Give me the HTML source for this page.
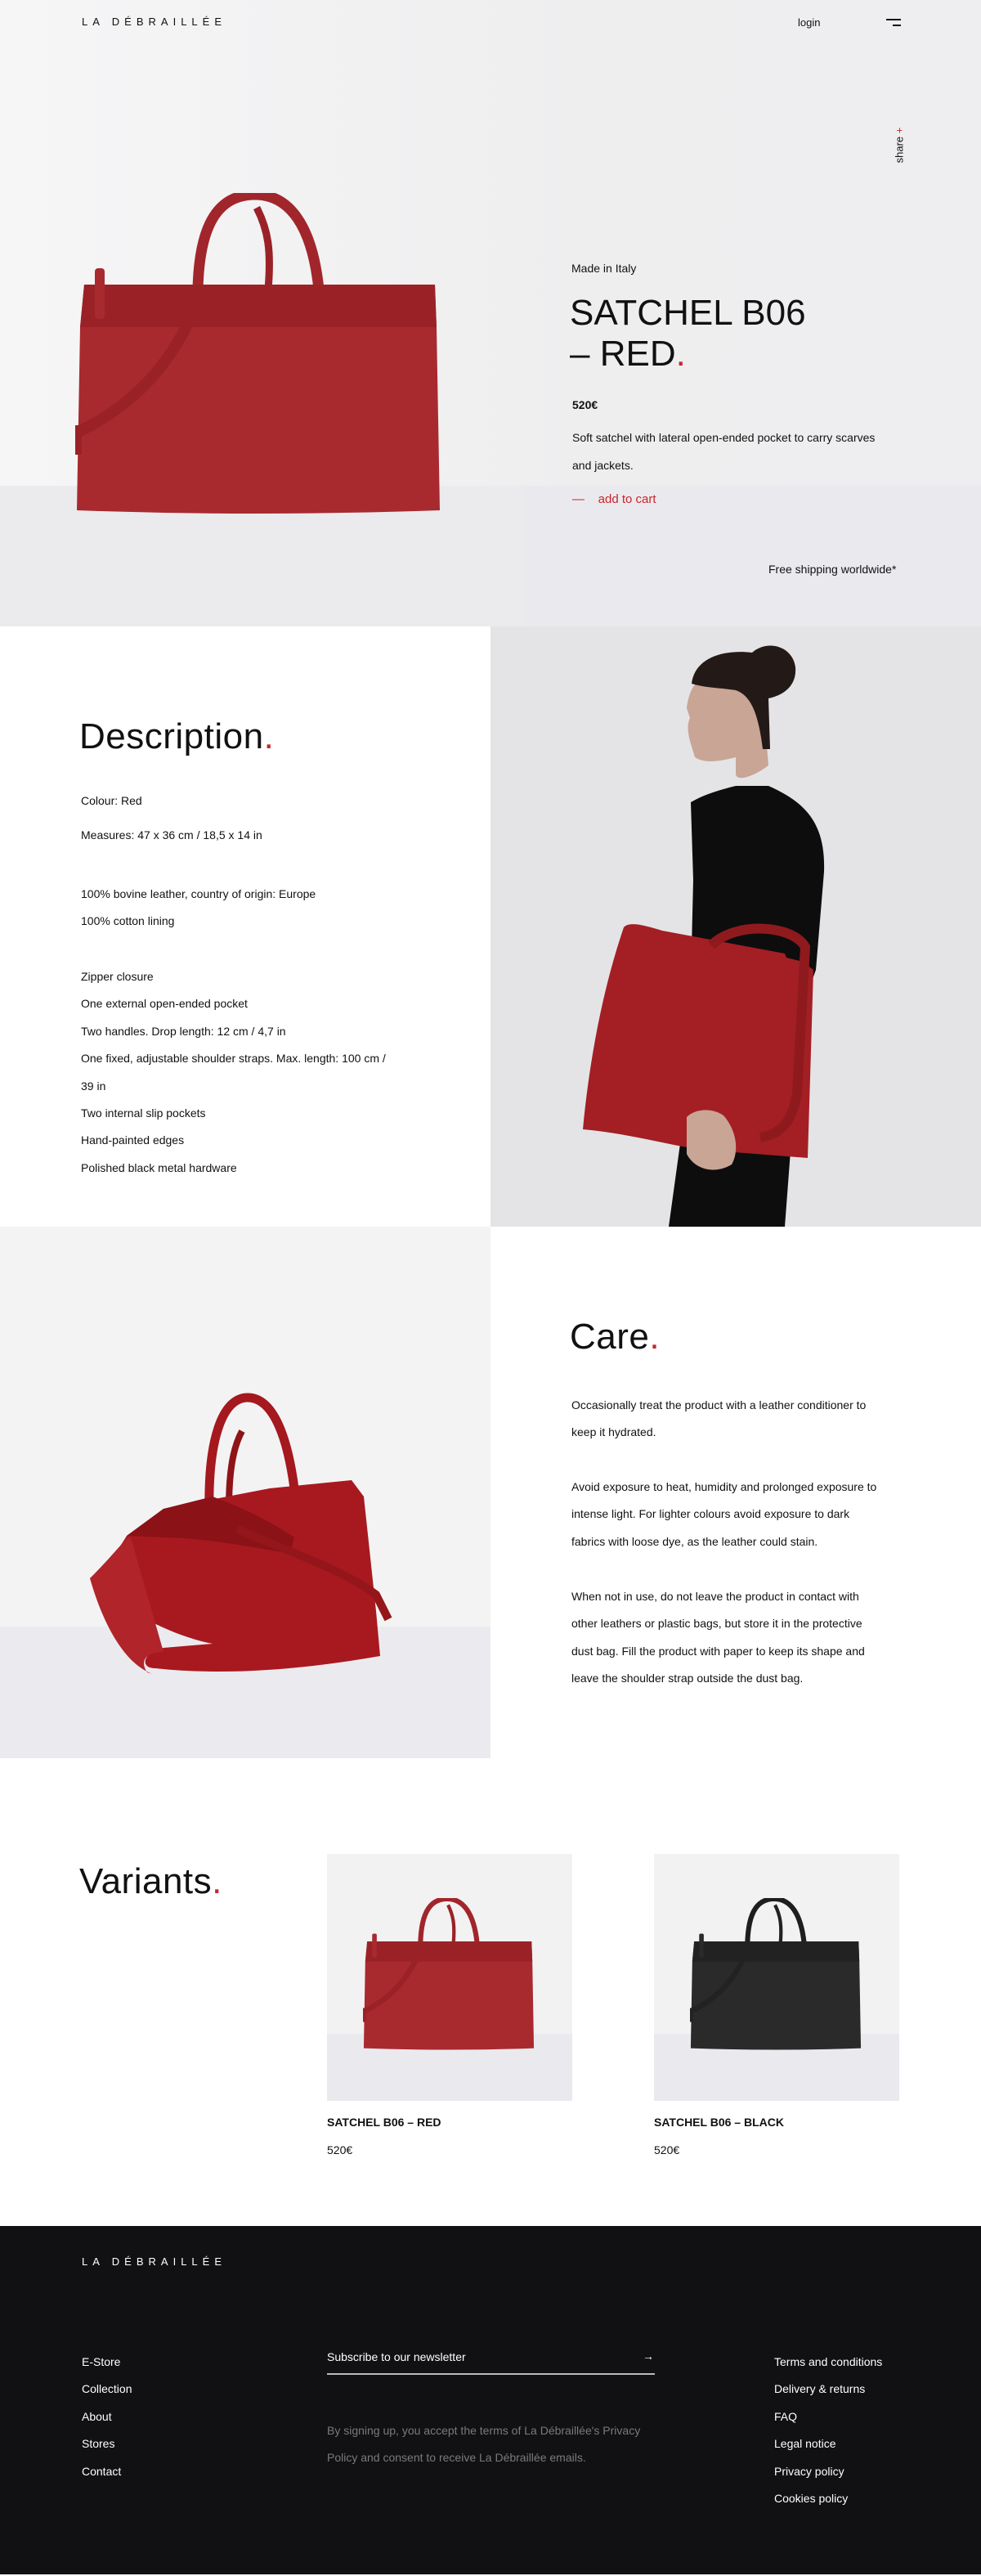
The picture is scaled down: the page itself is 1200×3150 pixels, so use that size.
<!DOCTYPE html>
<html><head><meta charset="utf-8">
<style>
*{margin:0;padding:0;box-sizing:border-box}
body{width:1200px;height:3150px;position:relative;font-family:"Liberation Sans",sans-serif;color:#111;background:#fff;overflow:hidden}
.a{position:absolute;white-space:nowrap}
.t{font-size:14px;line-height:20px}
.h{font-size:44px;letter-spacing:0.5px;line-height:50px}
.dot{color:#c8252b}
.logo{font-size:13px;letter-spacing:6px}
</style></head><body>
<svg width="0" height="0" style="position:absolute">
<defs>
<symbol id="bag" viewBox="0 0 448 393">
<path d="M150 118 C152 30 180 2 220 2 C262 2 290 40 298 118" fill="none" stroke="var(--h)" stroke-width="13"/>
<path d="M236 118 C240 70 236 45 222 18" fill="none" stroke="var(--d)" stroke-width="9"/>
<path d="M11 112 L440 112 L442 164 L446 388 Q224 396 2 388 L6 164Z" fill="var(--b)"/>
<path d="M11 112 L440 112 L442 164 L6 164Z" fill="var(--d)"/>
<rect x="24" y="92" width="12" height="62" rx="4" fill="var(--b)"/>
<rect x="272" y="112" width="18" height="50" fill="var(--d)"/>
<path d="M152 128 C120 210 70 260 4 292" fill="none" stroke="var(--d)" stroke-width="14"/>
<rect x="0" y="284" width="8" height="36" fill="var(--d)"/>
</symbol>
</defs>
</svg>

<!-- HERO -->
<div class="a" style="left:0;top:0;width:1200px;height:766px;background:linear-gradient(90deg,#f6f6f7 0%,#eeeeef 60%,#eeeef0 100%)"></div>
<div class="a" style="left:0;top:594px;width:640px;height:172px;background:#ebebee"></div>
<div class="a" style="left:640px;top:594px;width:560px;height:172px;background:#eaeaee"></div>
<svg class="a" style="left:92px;top:236px;--b:#a82a2f;--d:#9a2227;--h:#a1262b" width="448" height="393"><use href="#bag"/></svg>

<div class="a logo" style="left:100px;top:19px">LA DÉBRAILLÉE</div>
<div class="a t" style="left:976px;top:18px;font-size:13px">login</div>
<div class="a" style="left:1084px;top:23px;width:18px;height:2px;background:#111"></div>
<div class="a" style="left:1092px;top:30px;width:10px;height:2px;background:#111"></div>
<div class="a" style="left:1078px;top:170px;transform:rotate(-90deg);font-size:13px">share <span class="dot">+</span></div>

<div class="a t" style="left:699px;top:318px">Made in Italy</div>
<div class="a" style="left:697px;top:358px;font-size:44px;line-height:50px">SATCHEL B06<br>– RED<span class="dot">.</span></div>
<div class="a t" style="left:700px;top:485px;font-weight:bold">520€</div>
<div class="a t" style="left:700px;top:518px;line-height:34px">Soft satchel with lateral open-ended pocket to carry scarves<br>and jackets.</div>
<div class="a t" style="left:700px;top:601px;color:#c8252b;font-size:15px">—&nbsp;&nbsp;&nbsp;&nbsp;add to cart</div>
<div class="a t" style="left:940px;top:686px">Free shipping worldwide*</div>

<!-- DESCRIPTION -->
<div class="a h" style="left:97px;top:876px">Description<span class="dot">.</span></div>
<div class="a t" style="left:99px;top:969px">Colour: Red</div>
<div class="a t" style="left:99px;top:1011px">Measures: 47 x 36 cm / 18,5 x 14 in</div>
<div class="a t" style="left:99px;top:1077px;line-height:33.4px">100% bovine leather, country of origin: Europe<br>100% cotton lining</div>
<div class="a t" style="left:99px;top:1178px;line-height:33.4px">Zipper closure<br>One external open-ended pocket<br>Two handles. Drop length: 12 cm / 4,7 in<br>One fixed, adjustable shoulder straps. Max. length: 100 cm /<br>39 in<br>Two internal slip pockets<br>Hand-painted edges<br>Polished black metal hardware</div>

<svg class="a" style="left:600px;top:766px" width="600" height="734" viewBox="0 0 600 734">
<rect width="600" height="734" fill="#e4e4e7"/>
<path d="M245 215 C262 205 280 200 300 195 L340 195 C385 215 410 240 408 300 L398 420 L380 470 L360 734 L218 734 L242 560 L248 310 Z" fill="#0d0d0e"/>
<path d="M250 160 C244 140 238 125 244 112 L240 100 C244 70 256 60 280 55 L320 70 L335 110 L340 170 C320 185 300 190 300 180 L300 160 C280 165 262 168 250 160Z" fill="#c9a596"/>
<path d="M246 70 C250 38 285 28 320 32 C340 15 370 25 373 50 C375 75 355 85 340 88 L342 150 L333 150 C328 110 320 85 300 78 C280 75 262 75 246 70Z" fill="#231a18"/>
<path d="M163 368 C170 360 190 366 210 372 L360 400 L362 405 L382 410 L395 420 L388 650 L260 640 C220 635 170 620 113 615 C120 540 135 450 163 368Z" fill="#a31f24"/>
<path d="M270 390 C300 360 370 365 385 392 L375 570 C370 600 360 620 330 625" fill="none" stroke="#8f1a1e" stroke-width="12"/>
<path d="M240 600 C250 590 270 588 285 598 C300 615 305 640 295 658 C275 670 250 665 240 645Z" fill="#c9a596"/>
</svg>

<!-- CARE -->
<svg class="a" style="left:0;top:1500px" width="600" height="650" viewBox="0 0 600 650">
<rect width="600" height="650" fill="#f3f3f4"/>
<rect y="489" width="600" height="161" fill="#ebebef"/>
<path d="M256 350 C254 260 272 210 302 209 C335 208 352 260 360 320" fill="none" stroke="#a5181e" stroke-width="11"/>
<path d="M280 345 C280 300 285 270 296 250" fill="none" stroke="#8e1418" stroke-width="8"/>
<path d="M155 378 L200 345 L330 320 L430 310 L445 330 L460 470 L465 525 C380 540 280 550 190 540 C170 540 175 520 200 515 L260 510 C210 500 150 470 110 430 C130 415 145 395 155 378Z" fill="#a8191f"/>
<path d="M155 378 L200 345 L260 330 C300 345 330 360 360 380 L355 400 C300 390 240 380 200 380Z" fill="#8b1216"/>
<path d="M110 430 C145 395 155 378 160 380 L200 520 C180 520 170 530 180 545 L190 548 C160 540 130 500 110 430Z" fill="#b0242a"/>
<path d="M290 370 C360 400 420 420 460 450 L475 480" fill="none" stroke="#94161b" stroke-width="10"/>
</svg>
<div class="a h" style="left:697px;top:1610px">Care<span class="dot">.</span></div>
<div class="a t" style="left:699px;top:1702px;line-height:33.4px">Occasionally treat the product with a leather conditioner to<br>keep it hydrated.</div>
<div class="a t" style="left:699px;top:1802px;line-height:33.4px">Avoid exposure to heat, humidity and prolonged exposure to<br>intense light. For lighter colours avoid exposure to dark<br>fabrics with loose dye, as the leather could stain.</div>
<div class="a t" style="left:699px;top:1936px;line-height:33.4px">When not in use, do not leave the product in contact with<br>other leathers or plastic bags, but store it in the protective<br>dust bag. Fill the product with paper to keep its shape and<br>leave the shoulder strap outside the dust bag.</div>

<!-- VARIANTS -->
<div class="a h" style="left:97px;top:2276px">Variants<span class="dot">.</span></div>
<div class="a" style="left:400px;top:2267px;width:300px;height:302px;background:#f2f2f3"></div>
<div class="a" style="left:400px;top:2487px;width:300px;height:82px;background:#eaeaee"></div>
<svg class="a" style="left:444px;top:2321px;--b:#a82a2f;--d:#9a2227;--h:#a1262b" width="210" height="186" viewBox="0 0 448 393" preserveAspectRatio="none"><use href="#bag"/></svg>
<div class="a" style="left:800px;top:2267px;width:300px;height:302px;background:#f2f2f3"></div>
<div class="a" style="left:800px;top:2487px;width:300px;height:82px;background:#eaeaee"></div>
<svg class="a" style="left:844px;top:2321px;--b:#2a2a2b;--d:#222223;--h:#1e1e1f" width="210" height="186" viewBox="0 0 448 393" preserveAspectRatio="none"><use href="#bag"/></svg>
<div class="a t" style="left:400px;top:2585px;font-weight:bold">SATCHEL B06 – RED</div>
<div class="a t" style="left:400px;top:2619px">520€</div>
<div class="a t" style="left:800px;top:2585px;font-weight:bold">SATCHEL B06 – BLACK</div>
<div class="a t" style="left:800px;top:2619px">520€</div>

<!-- FOOTER -->
<div class="a" style="left:0;top:2722px;width:1200px;height:426px;background:#111113"></div>
<div class="a logo" style="left:100px;top:2758px;color:#fff">LA DÉBRAILLÉE</div>
<div class="a t" style="left:100px;top:2872px;color:#fff;line-height:33.4px">E-Store<br>Collection<br>About<br>Stores<br>Contact</div>
<div class="a t" style="left:400px;top:2872px;color:#fff">Subscribe to our newsletter</div>
<div class="a t" style="left:786px;top:2871px;color:#fff">→</div>
<div class="a" style="left:400px;top:2902px;width:401px;height:2px;background:#bbb"></div>
<div class="a t" style="left:400px;top:2956px;color:#7a7a7c;line-height:33.4px">By signing up, you accept the terms of La Débraillée's Privacy<br>Policy and consent to receive La Débraillée emails.</div>
<div class="a t" style="left:947px;top:2872px;color:#fff;line-height:33.4px">Terms and conditions<br>Delivery &amp; returns<br>FAQ<br>Legal notice<br>Privacy policy<br>Cookies policy</div>
</body></html>
